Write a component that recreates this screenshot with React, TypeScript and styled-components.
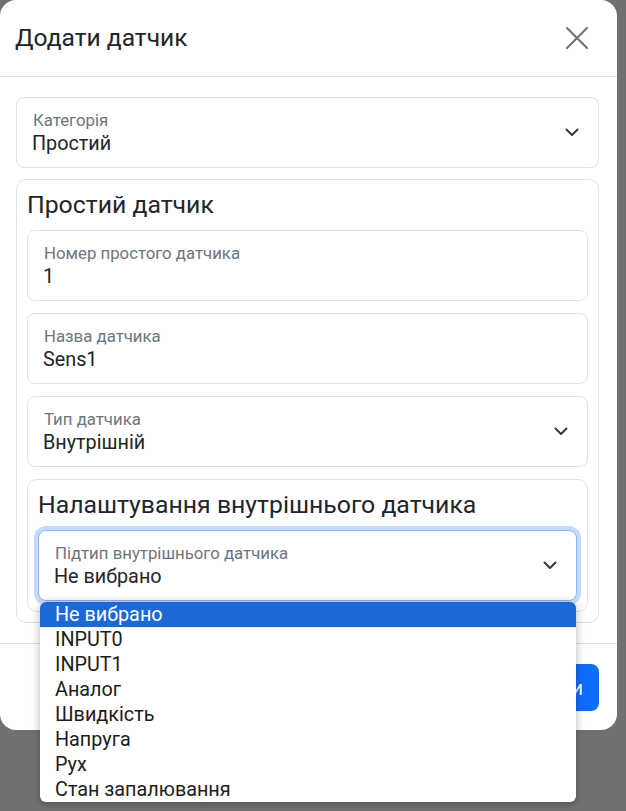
import React from "react";
import styled, { createGlobalStyle } from "styled-components";

const Global = createGlobalStyle`
  html, body { margin: 0; padding: 0; }
  body {
    background: #717171;
    font-family: Roboto, "Liberation Sans", Arial, sans-serif;
    color: #212529;
    width: 626px;
    height: 811px;
    overflow: hidden;
  }
  * { box-sizing: border-box; }
`;

const Modal = styled.div`
  width: 617px;
  background: #ffffff;
  border-radius: 16px;
  display: flex;
  flex-direction: column;
`;

const Header = styled.div`
  height: 77px;
  padding: 0 29px 0 15px;
  display: flex;
  align-items: center;
  justify-content: space-between;
  border-bottom: 1px solid #dee2e6;
`;

const Title = styled.h5`
  margin: 0;
  font-size: 24.6px;
  font-weight: 400;
  line-height: 30px;
  color: #212529;
`;

const CloseButton = styled.button`
  width: 22px;
  height: 22px;
  padding: 0;
  border: 0;
  background: transparent;
  display: flex;
  cursor: pointer;
`;

const Body = styled.div`
  padding: 20px 18px 20px 16px;
  display: flex;
  flex-direction: column;
  gap: 11px;
`;

const Card = styled.div`
  border: 1px solid #dee2e6;
  border-radius: 10px;
  padding: 10px;
  display: flex;
  flex-direction: column;
  gap: 12px;
`;

const CardTitle = styled.h4`
  margin: 0 0 -2px;
  font-size: 24.8px;
  font-weight: 400;
  line-height: 30px;
  color: #212529;
`;

const FieldBox = styled.div<{ $focused?: boolean }>`
  position: relative;
  height: 71px;
  border: 1px solid ${(p) => (p.$focused ? "#86b7fe" : "#dee2e6")};
  border-radius: 8px;
  padding: 11px 16px 0 16px;
  display: flex;
  align-items: flex-start;
  justify-content: space-between;
  background: #fff;
  box-shadow: ${(p) => (p.$focused ? "0 0 0 4px rgba(13,110,253,0.25)" : "none")};
`;

const FieldText = styled.div`
  display: flex;
  flex-direction: column;
`;

const Label = styled.span`
  font-size: 16.8px;
  line-height: 22px;
  color: #6c757d;
`;

const Value = styled.span`
  font-size: 19.8px;
  line-height: 26px;
  color: #212529;
  margin-left: -1px;
`;

const Chevron = styled.svg`
  align-self: center;
  margin-top: -11px;
  margin-right: 3px;
`;

const Dropdown = styled.ul`
  position: absolute;
  left: 1px;
  top: 71px;
  width: 536px;
  margin: 0;
  padding: 0;
  list-style: none;
  background: #fff;
  border-radius: 6px;
  overflow: hidden;
  box-shadow: 0 2px 10px rgba(0, 0, 0, 0.3);
  z-index: 10;
`;

const Option = styled.li<{ $selected?: boolean }>`
  height: 25px;
  padding-left: 15px;
  font-size: 19.8px;
  line-height: 25px;
  white-space: nowrap;
  color: ${(p) => (p.$selected ? "#ffffff" : "#1c1c1c")};
  background: ${(p) => (p.$selected ? "#1b68d6" : "transparent")};
`;

const Footer = styled.div`
  border-top: 1px solid #dee2e6;
  padding: 20px 18px 19px;
  display: flex;
  justify-content: flex-end;
`;

const PrimaryButton = styled.button`
  height: 47px;
  padding: 0 16px;
  border: 0;
  border-radius: 8px;
  background: #0d6efd;
  color: #fff;
  font-family: inherit;
  font-size: 20px;
`;

const ChevronIcon = () => (
  <Chevron width="14" height="9" viewBox="0 0 14 9">
    <path d="M1.5 1.5 L7 7 L12.5 1.5" fill="none" stroke="#343a40" strokeWidth="2" strokeLinecap="round" strokeLinejoin="round" />
  </Chevron>
);

type FieldProps = {
  label: string;
  value: string;
  select?: boolean;
  focused?: boolean;
  children?: React.ReactNode;
};

const Field = ({ label, value, select, focused, children }: FieldProps) => (
  <FieldBox $focused={focused}>
    <FieldText>
      <Label>{label}</Label>
      <Value>{value}</Value>
    </FieldText>
    {select && <ChevronIcon />}
    {children}
  </FieldBox>
);

const options = [
  "Не вибрано",
  "INPUT0",
  "INPUT1",
  "Аналог",
  "Швидкість",
  "Напруга",
  "Рух",
  "Стан запалювання",
];

export default function App() {
  return (
    <>
      <Global />
      <Modal>
        <Header>
          <Title>Додати датчик</Title>
          <CloseButton aria-label="Закрити">
            <svg width="22" height="22" viewBox="0 0 22 22">
              <path d="M1 1 L21 21 M21 1 L1 21" stroke="#707070" strokeWidth="2" strokeLinecap="round" />
            </svg>
          </CloseButton>
        </Header>
        <Body>
          <Field label="Категорія" value="Простий" select />
          <Card>
            <CardTitle>Простий датчик</CardTitle>
            <Field label="Номер простого датчика" value="1" />
            <Field label="Назва датчика" value="Sens1" />
            <Field label="Тип датчика" value="Внутрішній" select />
            <Card>
              <CardTitle>Налаштування внутрішнього датчика</CardTitle>
              <Field label="Підтип внутрішнього датчика" value="Не вибрано" select focused>
                <Dropdown>
                  {options.map((o, i) => (
                    <Option key={o} $selected={i === 0}>
                      {o}
                    </Option>
                  ))}
                </Dropdown>
              </Field>
            </Card>
          </Card>
        </Body>
        <Footer>
          <PrimaryButton>Зберегти</PrimaryButton>
        </Footer>
      </Modal>
    </>
  );
}
